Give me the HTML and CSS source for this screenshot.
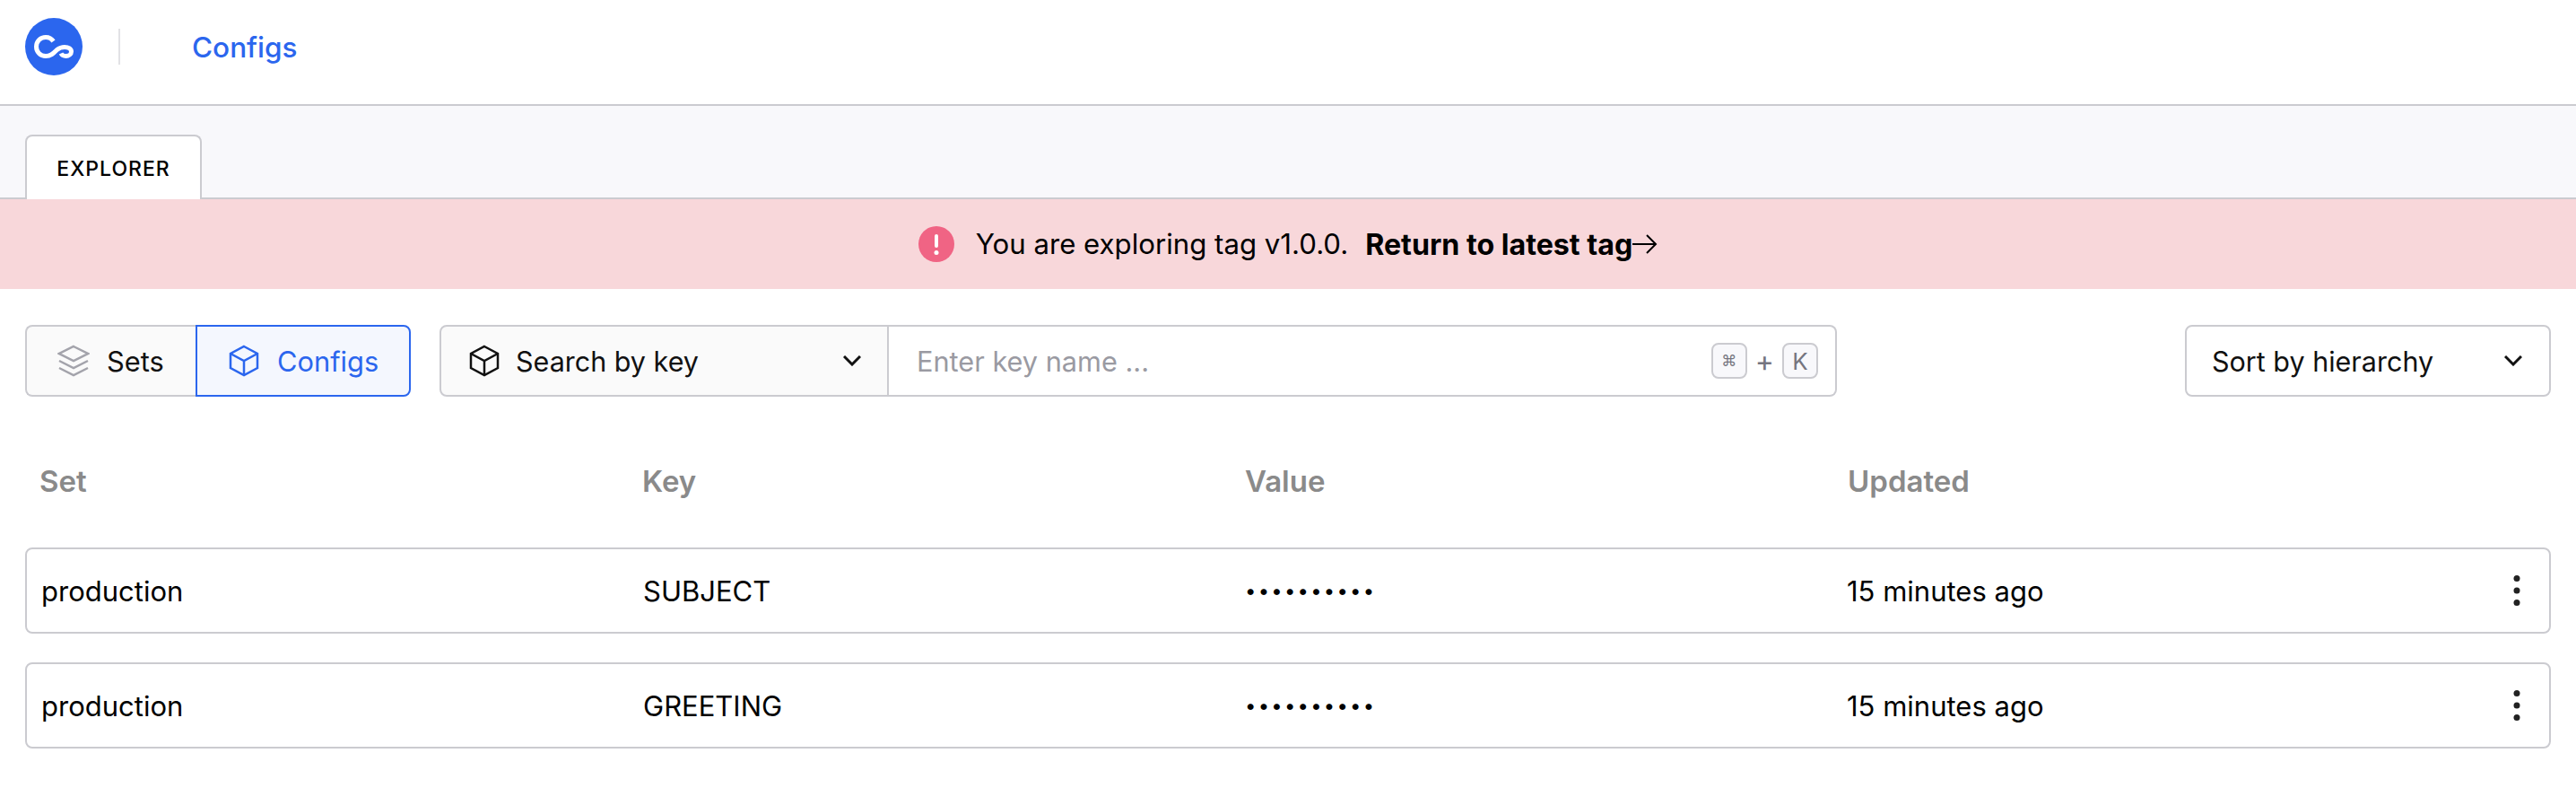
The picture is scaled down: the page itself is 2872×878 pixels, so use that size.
FILE: index.html
```html
<!DOCTYPE html>
<html lang="en">
  <head>
    <meta charset="UTF-8" />
    <title>Configs</title>
    <link rel="stylesheet" href="styles.css" />
  </head>
  <body>
    <header class="topbar">
      <svg class="logo" viewBox="0 0 64 64" width="64" height="64">
        <circle cx="32" cy="32" r="32" fill="#2b66ee" />
        <path
          d="M31.500 26C29.500 23 26.500 21.500 23 21.500C17 21.500 12.500 26 12.500 32C12.500 38 17 42.500 23 42.500C29 42.500 32 39 35.500 35.500C38 33.500 41 32.500 44 32.500C48.500 32.500 51.500 34.500 51.500 37.500C51.500 40.500 48.500 42.500 45.500 42.500C43 42.500 41 41.500 40 39.500"
          fill="none"
          stroke="#fff"
          stroke-width="5"
        />
      </svg>
      <span class="topbar-divider"></span>
      <a class="topbar-link">Configs</a>
    </header>

    <nav class="subnav">
      <div class="tab">EXPLORER</div>
    </nav>

    <div class="banner">
      <svg viewBox="0 0 40 40" width="40" height="40">
        <circle cx="20" cy="20" r="20" fill="#f06484" />
        <rect x="18" y="9" width="4" height="15" rx="2" fill="#fff" />
        <circle cx="20" cy="29.500" r="2.500" fill="#fff" />
      </svg>
      <span class="banner-text">You are exploring tag v1.0.0.</span>
      <span class="banner-link">
        <b>Return to latest tag</b>
        <svg viewBox="0 0 28 24" width="28" height="24" fill="none" stroke="#000" stroke-width="2">
          <path d="M0 12H26M16 2L26 12L16 22" />
        </svg>
      </span>
    </div>

    <div class="toolbar">
      <div class="switch">
        <button class="switch-btn">
          <svg viewBox="0 0 36 36" width="36" height="36" fill="none" stroke="#a3a3ab" stroke-width="2.500">
            <path d="M18 2L34 10L18 18L2 10Z" />
            <path d="M2 18L18 26L34 18" />
            <path d="M2 26L18 34L34 26" />
          </svg>
          Sets
        </button>
        <button class="switch-btn switch-btn-active">
          <svg viewBox="0 0 36 36" width="36" height="36" fill="none" stroke="#2b66ee" stroke-width="2.500">
            <path d="M18 2L33 10V26L18 34L3 26V10Z" />
            <path d="M3 10L18 18L33 10M18 18V34" />
          </svg>
          Configs
        </button>
      </div>

      <div class="search">
        <div class="search-select">
          <svg viewBox="0 0 36 36" width="36" height="36" fill="none" stroke="#111" stroke-width="2.500">
            <path d="M18 2L33 10V26L18 34L3 26V10Z" />
            <path d="M3 10L18 18L33 10M18 18V34" />
          </svg>
          <span>Search by key</span>
          <svg class="chevron" viewBox="0 0 20 12" width="20" height="12" fill="none" stroke="#111" stroke-width="3">
            <path d="M1 1L10 10L19 1" />
          </svg>
        </div>
        <div class="search-input">
          <span class="placeholder">Enter key name ...</span>
          <span class="keys">
            <kbd class="key key-cmd">⌘</kbd>
            +
            <kbd class="key">K</kbd>
          </span>
        </div>
      </div>

      <div class="sort">
        <span>Sort by hierarchy</span>
        <svg class="chevron" viewBox="0 0 20 12" width="20" height="12" fill="none" stroke="#111" stroke-width="3">
          <path d="M1 1L10 10L19 1" />
        </svg>
      </div>
    </div>

    <div class="table-head">
      <div>Set</div>
      <div>Key</div>
      <div>Value</div>
      <div>Updated</div>
    </div>

    <div class="row">
      <div>production</div>
      <div>SUBJECT</div>
      <div class="secret">••••••••••</div>
      <div>15 minutes ago</div>
      <svg class="more" viewBox="0 0 8 34" width="8" height="34" fill="#222">
        <circle cx="4" cy="3.500" r="3.500" />
        <circle cx="4" cy="17" r="3.500" />
        <circle cx="4" cy="30.500" r="3.500" />
      </svg>
    </div>
    <div class="row">
      <div>production</div>
      <div>GREETING</div>
      <div class="secret">••••••••••</div>
      <div>15 minutes ago</div>
      <svg class="more" viewBox="0 0 8 34" width="8" height="34" fill="#222">
        <circle cx="4" cy="3.500" r="3.500" />
        <circle cx="4" cy="17" r="3.500" />
        <circle cx="4" cy="30.500" r="3.500" />
      </svg>
    </div>
  </body>
</html>
```

FILE: styles.css
```css
* {
  box-sizing: border-box;
}
body {
  margin: 0;
  font-family: Inter, "Liberation Sans", sans-serif;
  font-size: 31px;
  color: #111;
  background-color: #fff;
}
.topbar {
  display: flex;
  align-items: center;
  height: 118px;
  padding: 0 28px 12px;
  border-bottom: 2px solid #cbcbd0;
}
.topbar-divider {
  width: 2px;
  height: 40px;
  margin-left: 40px;
  background-color: #e2e2e5;
}
.topbar-link {
  margin-left: 80px;
  font-size: 31.500px;
  font-weight: 500;
  color: #2b66ee;
}
.subnav {
  height: 104px;
  padding: 32px 28px 0;
  background-color: #f8f8fb;
  border-bottom: 2px solid #cbcbd0;
}
.tab {
  width: 197px;
  height: 72px;
  padding-top: 22px;
  text-align: center;
  font-size: 23px;
  line-height: 28px;
  font-weight: 500;
  letter-spacing: 1px;
  color: #000;
  background-color: #fff;
  border: 2px solid #cbcbd0;
  border-bottom: none;
  border-radius: 8px 8px 0 0;
}
.banner {
  display: flex;
  align-items: center;
  justify-content: center;
  height: 100px;
  background-color: #f8d7da;
}
.banner-text {
  margin-left: 24px;
  font-size: 31.200px;
  color: #000;
}
.banner-link {
  display: flex;
  align-items: center;
  margin-left: 19px;
  font-size: 32.200px;
  color: #000;
}
.toolbar {
  display: flex;
  align-items: center;
  padding: 40px 28px 0;
}
.switch {
  display: flex;
  height: 80px;
}
.switch-btn {
  display: flex;
  align-items: center;
  gap: 19px;
  width: 190px;
  padding: 0 0 0 34px;
  font: inherit;
  font-size: 30.800px;
  color: #111;
  background-color: #fafafa;
  border: 2px solid #cbcbd0;
  border-right: none;
  border-radius: 8px 0 0 8px;
}
.switch-btn-active {
  width: 240px;
  color: #2b66ee;
  background-color: #f4f7fe;
  border: 2px solid #2b66ee;
  border-radius: 0 8px 8px 0;
}
.search {
  display: flex;
  width: 1558px;
  height: 80px;
  margin-left: 32px;
}
.search-select {
  display: flex;
  align-items: center;
  gap: 17px;
  width: 501px;
  padding: 0 29px 0 30px;
  font-size: 30.500px;
  background-color: #fafafa;
  border: 2px solid #cbcbd0;
  border-radius: 8px 0 0 8px;
}
.search-input {
  display: flex;
  flex: 1;
  align-items: center;
  justify-content: space-between;
  padding: 0 19px 0 31px;
  border: 2px solid #cbcbd0;
  border-left: none;
  border-radius: 0 8px 8px 0;
}
.placeholder {
  font-size: 30.700px;
  color: #9a9aa2;
}
.keys {
  display: flex;
  align-items: center;
  gap: 9px;
  font-size: 32px;
  color: #75757f;
}
.key {
  display: flex;
  align-items: center;
  justify-content: center;
  width: 40px;
  height: 40px;
  font-family: inherit;
  font-size: 26px;
  background-color: #f8f8fb;
  border: 2px solid #cbcbd0;
  border-radius: 8px;
}
.key-cmd {
  font-family: "DejaVu Sans", sans-serif;
  font-size: 17px;
}
.sort {
  display: flex;
  align-items: center;
  justify-content: space-between;
  width: 408px;
  height: 80px;
  margin-left: auto;
  padding: 0 30px 0 28px;
  font-size: 30.500px;
  border: 2px solid #cbcbd0;
  border-radius: 8px;
}
.chevron {
  margin-left: auto;
}
.table-head {
  display: grid;
  grid-template-columns: repeat(4, 672px);
  height: 92px;
  margin: 76px 28px 0;
  padding-left: 16px;
  font-size: 33px;
  font-weight: 600;
  line-height: 36px;
  color: #8a8a8a;
}
.row {
  display: grid;
  grid-template-columns: repeat(4, 671px) 1fr;
  align-items: center;
  height: 96px;
  margin: 0 28px 32px;
  padding: 0 32px 0 16px;
  color: #000;
  border: 2px solid #cbcbd0;
  border-radius: 8px;
}
.secret {
  font-size: 22px;
  letter-spacing: 2.250px;
}
.more {
  justify-self: end;
}
```
